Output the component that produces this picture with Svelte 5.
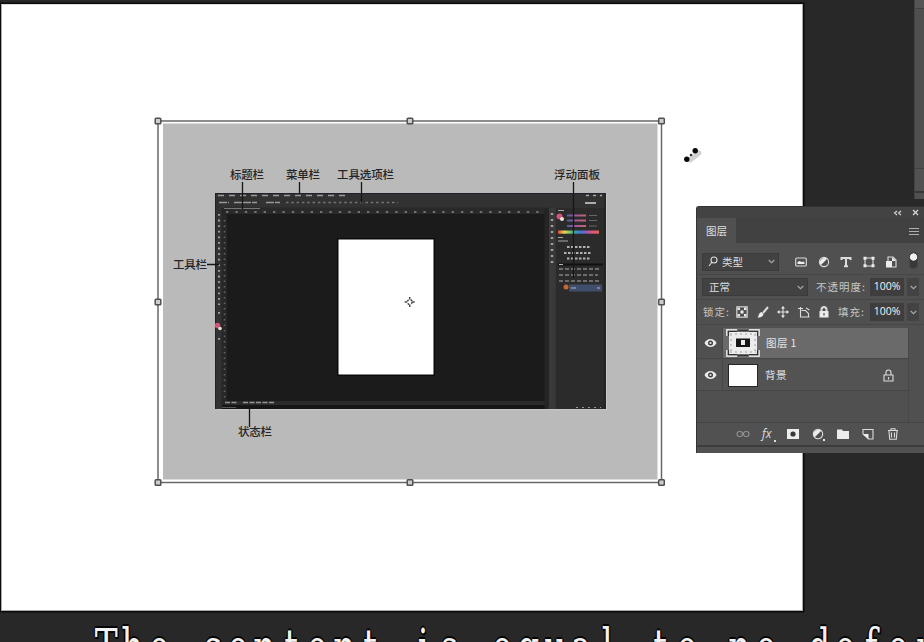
<script lang="ts">
  const caption = 'The content is equal to no defor';

  const notes = [
    { text: '标题栏', x: 230, y: 179, w: 34 },
    { text: '菜单栏', x: 286, y: 179, w: 34 },
    { text: '工具选项栏', x: 337, y: 179, w: 57 },
    { text: '浮动面板', x: 554, y: 179, w: 46 },
    { text: '工具栏', x: 173, y: 269, w: 34 },
    { text: '状态栏', x: 238, y: 436, w: 34 }
  ];

  const handles = [
    [158, 121], [410, 121], [661.5, 121],
    [158, 302], [661.5, 302],
    [158, 482.5], [410, 482.5], [661.5, 482.5]
  ];

  const layers = [
    { name: '图层 1', selected: true, locked: false },
    { name: '背景', selected: false, locked: true }
  ];
</script>

<div class="workspace">
  <div class="document"></div>

  <svg class="artboard" width="924" height="642" viewBox="0 0 924 642">
    <defs>
      <linearGradient id="spectrum">
        <stop offset="0" stop-color="#e04a32" />
        <stop offset=".15" stop-color="#e8d850" />
        <stop offset=".35" stop-color="#4cb780" />
        <stop offset=".5" stop-color="#3184d4" />
        <stop offset=".65" stop-color="#7465c4" />
        <stop offset=".82" stop-color="#e4517c" />
        <stop offset="1" stop-color="#d36a4e" />
      </linearGradient>
      <linearGradient id="slider" gradientUnits="userSpaceOnUse" x1="567" x2="586" y1="0" y2="0">
        <stop offset="0" stop-color="#4a5fae" />
        <stop offset=".5" stop-color="#a45a91" />
        <stop offset="1" stop-color="#c5636c" />
      </linearGradient>
    </defs>
    <rect x="163" y="123.5" width="494.5" height="356" fill="#bababa" />

    <!-- nested editor window -->
    <rect x="215" y="193" width="391" height="216" fill="#323232" />
    <path d="M215 193.5H606M215.5 193V409" stroke="#20222b" />
    <rect x="225" y="207.5" width="325" height="7" fill="#292929" />
    <rect x="227" y="214" width="320" height="187" fill="#1b1b1b" />
    <rect x="221.5" y="208" width="5.5" height="197" fill="#272727" />
    <rect x="225" y="401" width="322" height="4" fill="#2a2a2a" />
    <rect x="222" y="405" width="326" height="4" fill="#151515" />
    <rect x="544.5" y="208" width="4.5" height="201" fill="#252525" />
    <rect x="549" y="208" width="6.5" height="201" fill="#393939" />
    <rect x="556" y="208" width="49" height="201" fill="#2b2b2b" />
    <path d="M605 194V409" stroke="#1c1c1c" />
    <path d="M606.5 194V410M217 409.7H607" stroke="#d0d0d0" opacity=".65" />

    <g fill="none">
      <path d="M218 195.5H345" stroke="#9a9a9a" stroke-width="1.5" stroke-dasharray="6 5" />
      <path d="M219 202.5H229M234 202.5H257M266 202.5H280" stroke="#999" stroke-width="1.6" stroke-dasharray="8 1" />
      <path d="M286 202.5H398" stroke="#767676" stroke-width="1.5" stroke-dasharray="2.5 2.8" />
      <path d="M224 208.5H260" stroke="#777" />
      <path d="M226 212H543" stroke="#888" stroke-width="1.5" stroke-dasharray="2.4 7" />
      <path d="M219 214V305M219 312V314M219 338V340" stroke="#9d9d9d" stroke-width="2" stroke-dasharray="1.8 3.8" />
      <path d="M224.5 220V398" stroke="#666" stroke-width="1.5" stroke-dasharray="1.5 4" />
      <path d="M225 402.5H237M243 402.5H275" stroke="#959595" stroke-width="1.4" stroke-dasharray="5 1.5" />
      <path d="M222 407.5H236" stroke="#555" />
      <path d="M586 195.5H602" stroke="#aaa" stroke-width="1.5" stroke-dasharray="3 4" />
      <path d="M585 203H596" stroke="#bbb" stroke-width="1.8" />
      <path d="M552 213V263" stroke="#a0a0a0" stroke-width="2.5" stroke-dasharray="2 4" />
      <path d="M558 210.5H564M558 237.5H563M558 241H568" stroke="#aaa" />
      <path d="M567 215.5H586M567 220.5H586M567 226H586" stroke="url(#slider)" stroke-width="2" />
      <path d="M589 215.5H597M589 220.5H597M589 226H597" stroke="#666" />
      <path d="M567 247H590M564 253H592M567 258.5H590" stroke="#b2b2b2" stroke-width="1.8" stroke-dasharray="2.500 1.500" />
      <path d="M558 264.5H603" stroke="#111" stroke-width="2" />
      <path d="M559 264.5H563" stroke="#bbb" />
      <path d="M559 269H600M559 275H598M559 281H600" stroke="#6c6c6c" stroke-width="1.8" stroke-dasharray="4 2" />
      <path d="M576 407.5H601" stroke="#999" stroke-dasharray="2 4" />
    </g>
    <circle cx="217.5" cy="325.5" r="2.7" fill="#d3547a" />
    <circle cx="220" cy="328.5" r="1.8" fill="#eedecf" />
    <circle cx="559.5" cy="216.5" r="3" fill="#d3547a" />
    <circle cx="562" cy="219" r="2" fill="#f0e5dd" />
    <rect x="558" y="230.5" width="41" height="3.2" fill="url(#spectrum)" />
    <rect x="569" y="284.5" width="33" height="7" fill="#414e6b" />
    <path d="M571 288H576M597 288H600" stroke="#8994b2" stroke-width="1.5" />
    <circle cx="566" cy="287" r="2.5" fill="#c66835" />
    <rect x="337" y="238" width="98" height="138" fill="#0a0a0a" />
    <rect x="338.5" y="239.5" width="95" height="135" fill="#fff" />

    <path class="leader" d="M242.5 182V209M299.5 182V194M361.5 182V203M573.5 182V278M207 264.5H219M249.5 405V427" />
    {#each notes as note}
      <text class="note" x={note.x} y={note.y} textLength={note.w}>{note.text}</text>
    {/each}

    <!-- transform box -->
    <rect x="158" y="121" width="503.5" height="361.5" fill="none" stroke="#686868" stroke-width="1.5" />
    {#each handles as [x, y]}
      <rect x={x - 2.8} y={y - 2.8} width="5.6" height="5.6" rx=".8" fill="#ccc" stroke="#505050" stroke-width="1.5" />
    {/each}
    <g fill="none" stroke="#444" stroke-width="1.5">
      <circle cx="409.7" cy="302" r="2.4" stroke-dasharray="1.8 1.9" />
      <path d="M409.7 297v2.5M409.7 304.500v2.500M404.7 302h2.500M412.2 302h2.500" />
    </g>

    <!-- cursor -->
    <path d="M690 160l9-7" stroke="#d0d0d0" stroke-width="5" stroke-linecap="round" />
    <circle cx="686.8" cy="159.2" r="2.7" fill="#080808" />
    <circle cx="695.2" cy="150.8" r="2.7" fill="#080808" />
    <circle cx="691" cy="155" r="1.3" fill="#333" />
  </svg>

  <aside class="dock"></aside>

  <section class="panel">
    <header class="titlebar">
      <svg width="9" height="6" viewBox="0 0 9 6"><path d="M4 1L1.5 3L4 5M8 1L5.5 3L8 5" /></svg>
      <svg width="7" height="7" viewBox="0 0 7 7"><path d="M1 1l5 5M6 1L1 6" /></svg>
    </header>
    <div class="tabs">
      <span class="tab">图层</span>
      <svg width="10" height="8" viewBox="0 0 10 8"><path d="M0 1.500h10M0 4.500h10M0 7.500h10" /></svg>
    </div>

    <div class="row filter">
      <div class="select kind">
        <svg width="10" height="11" viewBox="0 0 10 11"><circle cx="6" cy="4" r="3" /><path d="M4 6L1 10" /></svg>
        <span>类型</span>
        {@render chevron()}
      </div>
      <div class="filter-icons">
        <svg viewBox="0 0 12 12"><rect x=".7" y="2" width="10.6" height="8" rx="1" /><path class="solid" d="M2.5 8V6l2-1 2 1 2-.5 1 1V8z" /></svg>
        <svg viewBox="0 0 12 12"><circle cx="6" cy="6" r="4.6" /><path class="solid" d="M2.8 9.2A4.6 4.6 0 0 1 9.2 2.8z" /></svg>
        <svg viewBox="0 0 12 12"><path class="heavy" d="M1.5 4V2h9v2M6 2v8M4 10.2h4" /></svg>
        <svg viewBox="0 0 12 12"><path d="M2 2h8v8H2z" /><path class="solid" d="M.5.8h3v3h-3zM8.5.8h3v3h-3zM.5 8.3h3v3h-3zM8.5 8.3h3v3h-3z" /></svg>
        <svg viewBox="0 0 12 12"><path d="M3 5V1h5l3 3v7H7" /><path class="solid" d="M1 5h6v6.5H1zM7 1v4h4z" /></svg>
      </div>
      <span class="toggle"></span>
    </div>

    <div class="row blend">
      <div class="select mode"><span>正常</span>{@render chevron()}</div>
      <span class="label">不透明度:</span>
      <span class="value">100%</span>
      <span class="drop">{@render chevron()}</span>
    </div>

    <div class="row locks">
      <span class="label">锁定:</span>
      <div class="lock-icons">
        <svg viewBox="0 0 12 12"><rect x=".8" y=".8" width="10.4" height="10.4" /><path class="solid" d="M1.5 1.5h2.4v2.4H1.5zM8 1.5h2.5v2.4H8zM4.5 4.5h3v3h-3zM1.5 8h2.4v2.5H1.5zM8 8h2.5v2.5H8z" /></svg>
        <svg viewBox="0 0 12 12"><path class="heavy" d="M11 1L6 7" /><path class="solid" d="M4.5 6l2 2C6 11 3 11.5.5 11.5 2 10 1.5 7 4.5 6" /></svg>
        <svg viewBox="0 0 12 12"><path d="M6 1v10M1 6h10" /><path class="solid" d="M6 0l2 2.5H4zM6 12l2-2.5H4zM0 6l2.5-2v4zM12 6L9.5 4v4z" /></svg>
        <svg viewBox="0 0 12 12"><path d="M0 2.500H5M2.500 1V11H11.500M3.500 4.500H7.500L10.500 7.500V11M8 2l3.500 2" /></svg>
        <svg viewBox="0 0 12 12"><path class="heavy" d="M3.500 5V3.500a2.500 2.500 0 0 1 5 0V5" /><path class="solid" d="M1.500 5h9v6.500h-9z" /><path d="M6 7v2.500" stroke="#444" /></svg>
      </div>
      <span class="label fill">填充:</span>
      <span class="value">100%</span>
      <span class="drop">{@render chevron()}</span>
    </div>

    <div class="layers">
      {#each layers as layer}
        <div class="layer" class:selected={layer.selected}>
          <span class="eye">
            <svg width="13" height="10" viewBox="0 0 13 10">
              <path class="solid" d="M.5 5C3-.2 10-.2 12.5 5 10 10.2 3 10.2.5 5" />
              <circle cx="6.5" cy="5" r="2.5" fill="#3d3d3d" stroke="none" /><circle class="solid" cx="6.5" cy="5" r="1.1" />
            </svg>
          </span>
          {#if layer.selected}
            <svg class="thumb" width="34" height="28" viewBox="0 0 34 28">
              <path class="solid" d="M3 3h28v22H3z" />
              <path d="M4 5H30M4 23H30M5 5V23M29 5V23" stroke="#c6c6c6" stroke-dasharray="2 3" stroke-width="2" />
              <path d="M.8 7V.8H11M23 .8H33.2V7M.8 21V27.2H11M23 27.2H33.2V21" stroke="#dedede" stroke-width="1.5" />
              <path d="M2.5 7V2.5H11M23 2.5H31.5V7M2.5 21V25.5H11M23 25.5H31.5V21M12 1.5H22M12 26.5H22" stroke="#333" />
              <path d="M10 9.5h14v8.500H10z" fill="#161616" stroke="none" />
              <path class="solid" d="M15 11h4v5h-4z" />
            </svg>
          {:else}
            <span class="thumb blank"></span>
          {/if}
          <span class="name">{layer.name}</span>
          {#if layer.locked}
            <svg class="lock" width="11" height="13" viewBox="0 0 11 13"><path d="M3 6V3.5a2.5 2.5 0 0 1 5 0V6M1 6h9v6H1zM5.5 8v2.5" /></svg>
          {/if}
        </div>
      {/each}
    </div>

    <footer>
      <svg class="dim" viewBox="0 0 14 12"><rect x="1" y="3.5" width="5.5" height="5" rx="2.5" /><rect x="7.5" y="3.5" width="5.5" height="5" rx="2.5" /></svg>
      <span class="fx">fx<i></i></span>
      <svg viewBox="0 0 14 12"><path class="solid" d="M1 1h12v10H1z" /><circle cx="7" cy="6" r="2.6" fill="#383838" stroke="none" /></svg>
      <svg viewBox="0 0 14 12"><circle cx="7" cy="6" r="4.7" /><path class="solid" d="M3.7 9.3A4.7 4.7 0 0 1 10.3 2.7zM12 11h2v2h-2z" /></svg>
      <svg viewBox="0 0 14 12"><path class="solid" d="M1 1.500h5l1 1.500h6v8H1z" /></svg>
      <svg viewBox="0 0 14 12"><path d="M2 1.500h10V11H7.500L2 6z" /><path class="solid" d="M2 6h5.500v5z" /></svg>
      <svg viewBox="0 0 14 12"><path d="M2 2.500h10M5 2V.7h4V2M3 3l.7 8.300h6.600L11 3M5.500 4.500v5M8.500 4.500v5" /></svg>
    </footer>
    <div class="grip"></div>
  </section>

  <div class="caption">
    {#each caption as letter}<span>{letter}</span>{/each}
  </div>
</div>

{#snippet chevron()}
  <svg class="chevron" width="7" height="5" viewBox="0 0 7 5"><path d="M.7 1L3.5 3.7L6.3 1" /></svg>
{/snippet}

<style>
  :global(body) {
    background: #282828;
    overflow: hidden;
  }

  .workspace {
    position: relative;
    width: 924px;
    height: 642px;
    overflow: hidden;
    background: #282828;
    font-family: 'Noto Sans CJK SC', sans-serif;
  }

  .document {
    position: absolute;
    left: 1px;
    top: 4px;
    width: 802px;
    height: 607px;
    box-sizing: border-box;
    background: #fff;
    border: 1px solid #aaa;
    border-top-color: #ddd;
    box-shadow: 0 0 0 1.5px #0b0b0b;
  }

  .artboard {
    position: absolute;
    inset: 0;
  }

  .leader {
    fill: none;
    stroke: #161616;
    stroke-width: 1.3;
  }

  .note {
    font-size: 11.5px;
    font-weight: 500;
    fill: #252525;
  }

  .dock {
    position: absolute;
    left: 914px;
    top: 0;
    width: 10px;
    height: 199px;
    box-sizing: border-box;
    background: linear-gradient(#555 8px, #414141 8px 9px, #4f4f4f 9px 168px, #414141 168px 169px, #525252 169px 191px, #373737 191px 193px, #515151 193px);
    border-left: 1px solid #424242;
  }

  /* Layers panel */
  .panel {
    position: absolute;
    left: 696px;
    top: 206px;
    width: 228px;
    height: 247px;
    box-sizing: border-box;
    display: flex;
    flex-direction: column;
    background: #505050;
    border: solid #333;
    border-width: 1px 0 0 1px;
    border-radius: 3px 0 0 0;
    color: #dedede;
    font-size: 10.5px;
    line-height: 14px;
  }

  .panel svg {
    flex-shrink: 0;
    fill: none;
    stroke: #dcdcdc;
    stroke-width: 1.1;
    overflow: visible;
  }

  .panel .solid {
    fill: #ececec;
    stroke: none;
  }

  .panel .heavy {
    stroke-width: 2;
  }

  .titlebar {
    height: 11px;
    display: flex;
    justify-content: flex-end;
    align-items: center;
    gap: 10px;
    padding-right: 5px;
    background: #434343;
  }

  .tabs {
    height: 25px;
    display: flex;
    justify-content: space-between;
    align-items: center;
    padding-right: 5px;
    background: #414141;
  }

  .panel .tabs svg {
    stroke: #b0b0b0;
    stroke-width: 1;
  }

  .tab {
    width: 39px;
    height: 25px;
    box-sizing: border-box;
    padding-left: 9px;
    line-height: 25px;
    background: #505050;
  }

  .row {
    height: 25px;
    display: flex;
    align-items: center;
    padding-left: 5px;
    box-sizing: border-box;
    border-bottom: 1px solid #474747;
  }

  .filter {
    height: 32px;
    padding-top: 6px;
  }

  .select {
    height: 18px;
    box-sizing: border-box;
    display: flex;
    align-items: center;
    padding: 0 3px 0 6px;
    background: #424242;
    border: 1px solid #3b3b3b;
  }

  .select .chevron {
    margin-left: auto;
  }

  .panel .chevron {
    stroke: #aaa;
  }

  .kind {
    width: 77px;
    gap: 4px;
    padding-left: 5px;
  }

  .mode {
    width: 106px;
  }

  .filter-icons {
    display: flex;
    gap: 10.5px;
    margin-left: 16px;
  }

  .filter-icons svg,
  .lock-icons svg {
    width: 12px;
    height: 12px;
  }

  .toggle {
    width: 7px;
    height: 15px;
    margin: -3px 0 0 12px;
    border-radius: 4px;
    background: radial-gradient(circle at 50% 4px, #f1f1f1 3.3px, #393939 4px);
    border: 1px solid #454545;
  }

  .label {
    width: 62px;
    padding-left: 8px;
    box-sizing: border-box;
    color: #c7c7c7;
    letter-spacing: 1px;
    white-space: nowrap;
  }

  .locks .label {
    width: 34px;
    padding-left: 1px;
  }

  .locks .label.fill {
    padding-left: 2px;
    margin-left: 6px;
  }

  .value {
    width: 34px;
    height: 18px;
    line-height: 17px;
    text-align: center;
    background: #3e3e3e;
    font-family: 'Open Sans', sans-serif;
    color: #f3f3f3;
  }

  .drop {
    width: 12px;
    height: 18px;
    margin-left: 3px;
    display: grid;
    place-items: center;
    background: #434343;
  }

  .lock-icons {
    display: flex;
    gap: 8.5px;
  }

  .layers {
    height: 94px;
    width: 211px;
    margin-top: 3px;
    border-right: 1px solid #484848;
  }

  .layer {
    height: 31px;
    display: flex;
    align-items: center;
    box-sizing: border-box;
    border-bottom: 1px solid #464646;
    background: #535353;
    margin-bottom: 1px;
  }

  .layer.selected {
    background: linear-gradient(90deg, #505050 25px, #6a6a6a 25px);
  }

  .eye {
    width: 26px;
    height: 30px;
    display: grid;
    place-items: center;
    box-sizing: border-box;
    border-right: 1px solid #464646;
    padding-left: 2px;
  }

  .thumb {
    margin-left: 3px;
  }

  .blank {
    width: 28px;
    height: 21px;
    margin: 0 3px 0 5px;
    background: #fff;
    border: 1px solid #252525;
  }

  .name {
    margin-left: 6px;
    color: #e4e4e4;
    letter-spacing: .4px;
  }

  .blank + .name {
    margin-left: 4px;
  }

  .lock {
    margin: 0 14px 0 auto;
  }

  footer {
    height: 23px;
    box-sizing: border-box;
    display: flex;
    align-items: center;
    gap: 11px;
    padding-left: 39px;
    border-top: 1px solid #454545;
    background: #515151;
  }

  footer svg {
    width: 14px;
    height: 12px;
  }

  .panel .dim {
    stroke: #929292;
  }

  .fx {
    position: relative;
    width: 13px;
    padding-left: 1px;
    font: italic 12px/14px 'Open Sans', sans-serif;
  }

  .fx i {
    position: absolute;
    right: -1px;
    bottom: -1px;
    width: 2px;
    height: 2px;
    background: #ddd;
  }

  .grip {
    flex: 1;
    border-top: 2px solid #3c3c3c;
    background: #515151;
  }

  /* Subtitle, one fixed cell per letter */
  .caption {
    position: absolute;
    left: 93px;
    top: 616px;
    display: flex;
    color: #f2f2f2;
    font-family: 'DejaVu Serif', serif;
    font-size: 52px;
    line-height: 64px;
    text-shadow: -2px 0 #050505, 2px 0 #050505, 0 -2px #050505, 0 2px #050505, 2px 2px #050505;
  }

  .caption span {
    width: 26.4px;
    display: flex;
    flex-shrink: 0;
    justify-content: center;
    transform: scaleX(.66);
  }
</style>
